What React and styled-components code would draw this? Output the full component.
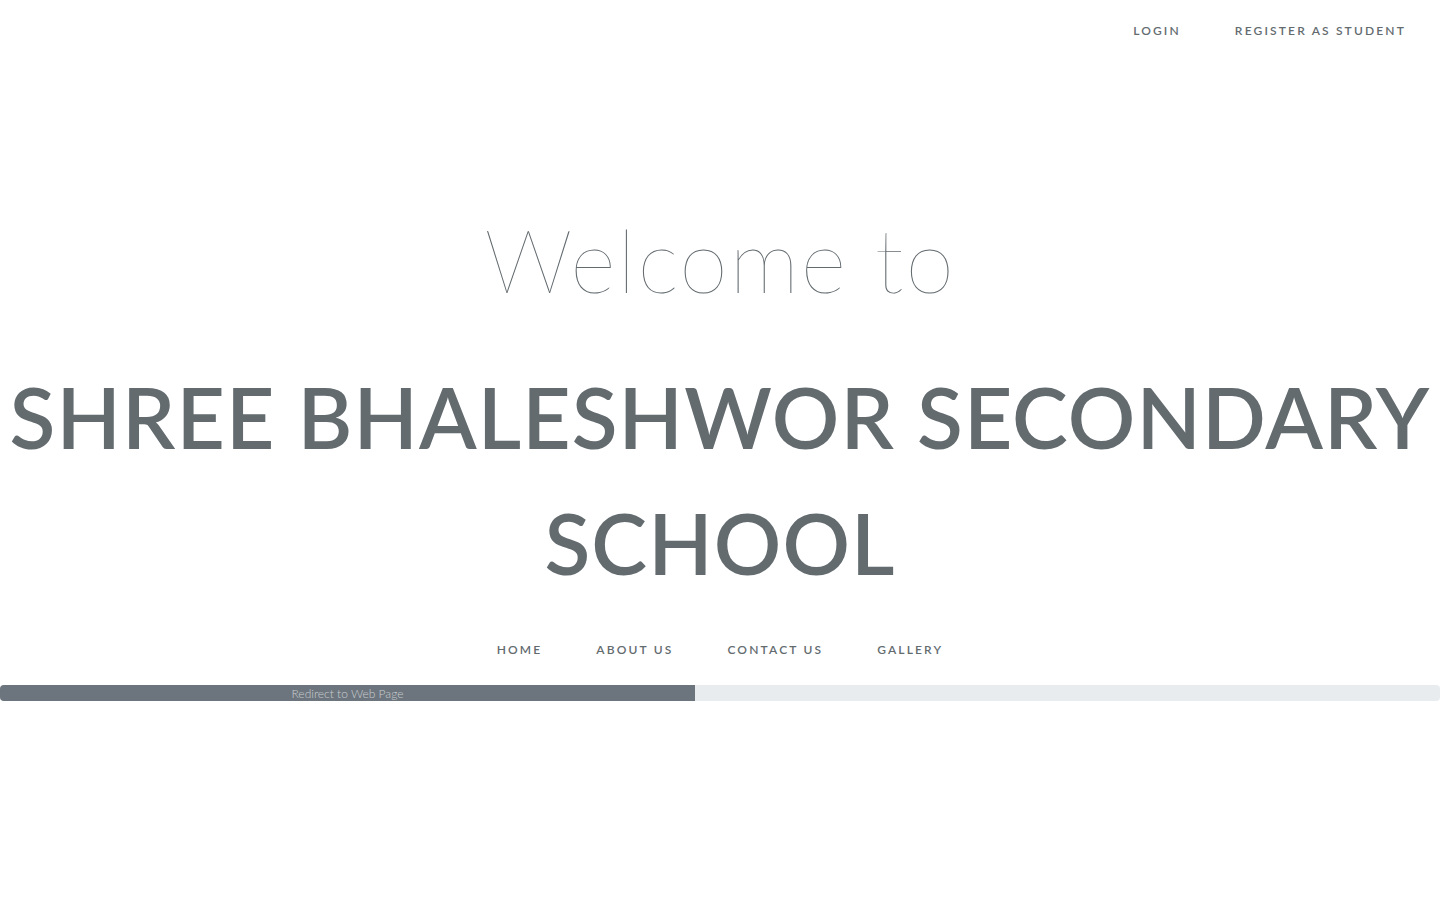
import React from 'react';
import styled, { createGlobalStyle } from 'styled-components';

const GlobalStyle = createGlobalStyle`
  html, body {
    margin: 0;
    padding: 0;
    background: #fff;
    color: #636b6f;
    font-family: Lato, "Open Sans", "Liberation Sans", sans-serif;
  }
  * { box-sizing: border-box; }
`;

const topLinks = ['Login', 'Register as Student'];
const navLinks = ['Home', 'About Us', 'Contact Us', 'Gallery'];

const App = () => {
  const progress = 48.26;
  return (
    <Page>
      <GlobalStyle />
      <TopBar>
        {topLinks.map((l) => (
          <LinkItem key={l} href="#">{l}</LinkItem>
        ))}
      </TopBar>
      <Content>
        <Welcome>Welcome to</Welcome>
        <SchoolName>Shree Bhaleshwor Secondary<br />School</SchoolName>
        <Nav>
          {navLinks.map((l) => (
            <LinkItem key={l} href="#">{l}</LinkItem>
          ))}
        </Nav>
        <Progress>
          <Bar style={{ width: `${progress}%` }}>Redirect to Web Page</Bar>
        </Progress>
      </Content>
    </Page>
  );
};

export default App;

const Page = styled.div`
  width: 100%;
  min-height: 900px;
`;

const TopBar = styled.div`
  display: flex;
  justify-content: flex-end;
  align-items: center;
  height: 62px;
  padding-right: 7px;
`;

const LinkItem = styled.a`
  color: #636b6f;
  padding: 0 27px;
  font-size: 12px;
  font-weight: 600;
  letter-spacing: 0.18em;
  line-height: 18px;
  text-decoration: none;
  text-transform: uppercase;
`;

const Content = styled.div`
  display: flex;
  flex-direction: column;
  align-items: center;
  text-align: center;
`;

const Welcome = styled.div`
  margin-top: 134px;
  font-size: 88px;
  font-weight: 100;
  line-height: 126px;
  letter-spacing: 0.02em;
`;

const SchoolName = styled.h1`
  margin: 32px 0 0;
  font-size: 84px;
  font-weight: 600;
  line-height: 126px;
  letter-spacing: 0.013em;
  text-transform: uppercase;
  white-space: nowrap;
`;

const Nav = styled.div`
  display: flex;
  justify-content: center;
  margin-top: 35px;
`;

const Progress = styled.div`
  width: 100%;
  height: 16px;
  margin-top: 26px;
  display: flex;
  overflow: hidden;
  background: #e9ecef;
  border-radius: 4px;
`;

const Bar = styled.div`
  display: flex;
  align-items: center;
  justify-content: center;
  background: #6c757d;
  color: #c9cdd1;
  font-size: 12px;
  font-weight: 300;
  white-space: nowrap;
`;
